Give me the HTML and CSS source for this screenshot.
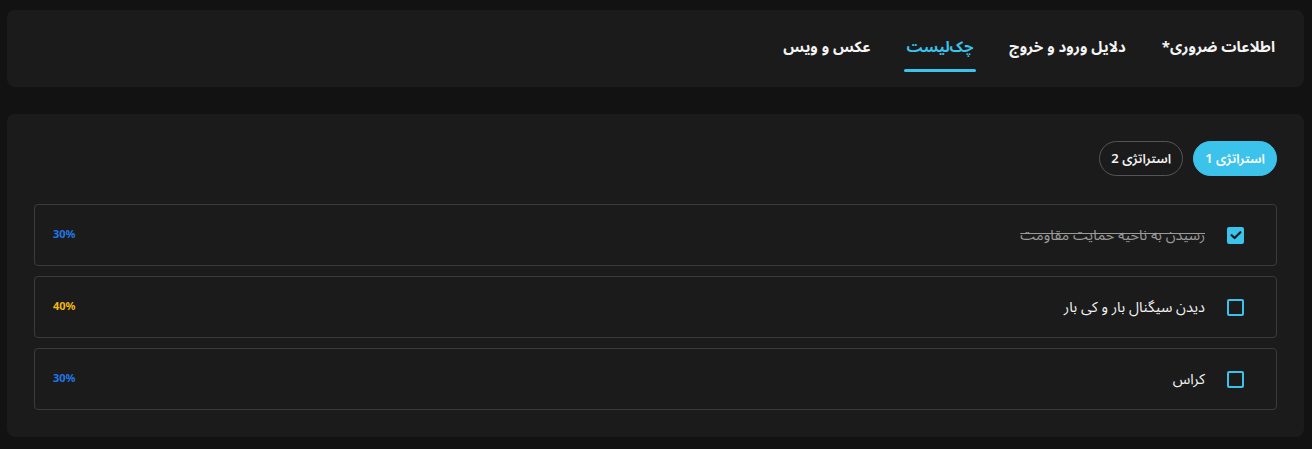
FILE: index.html
```html
<!DOCTYPE html>
<html lang="fa" dir="rtl">
<head>
<meta charset="utf-8">
<link rel="stylesheet" href="styles.css">
</head>
<body>
<div class="page">
  <nav class="card tabs">
    <div class="tab">اطلاعات ضروری*</div>
    <div class="tab">دلایل ورود و خروج</div>
    <div class="tab active">چک‌لیست</div>
    <div class="tab">عکس و ویس</div>
  </nav>
  <section class="card checklist">
    <div class="pills">
      <button class="pill on">استراتژی 1</button>
      <button class="pill">استراتژی 2</button>
    </div>
    <div class="rows">
      <div class="row">
        <span class="box checked"><svg viewBox="0 0 16 16" width="16" height="16"><path d="M3.6 8.2 L6.6 11 L12.4 5.2" fill="none" stroke="#1b1b1b" stroke-width="2.2" stroke-linecap="round" stroke-linejoin="round"/></svg></span>
        <span class="label done">رسیدن به ناحیه حمایت مقاومت</span>
        <span class="pct blue">30%</span>
      </div>
      <div class="row">
        <span class="box"></span>
        <span class="label">دیدن سیگنال بار و کی بار</span>
        <span class="pct yellow">40%</span>
      </div>
      <div class="row">
        <span class="box"></span>
        <span class="label">کراس</span>
        <span class="pct blue">30%</span>
      </div>
    </div>
  </section>
</div>
</body>
</html>
```
FILE: styles.css
```css
* { box-sizing: border-box; }
html, body { margin: 0; padding: 0; }
body {
  background: #121212;
  font-family: "Noto Sans Arabic", "DejaVu Sans", "Noto Sans", sans-serif;
  color: #f2f2f2;
  width: 1312px;
  height: 449px;
  overflow: hidden;
}
.page {
  padding: 10px 8px 0 7px;
  display: flex;
  flex-direction: column;
  gap: 27px;
}
.card {
  background: #1b1b1b;
  border-radius: 8px;
}
.tabs {
  height: 77px;
  display: flex;
  align-items: stretch;
  gap: 30px;
  padding: 0 26px 0 0;
}
.tab {
  display: flex;
  align-items: center;
  padding: 0 3px 4px;
  font-size: 15px;
  font-weight: bold;
  color: #f4f4f4;
  position: relative;
}
.tab.active { color: #3cc3ec; }
.tab.active::after {
  content: "";
  position: absolute;
  left: 0;
  right: 0;
  top: 59px;
  height: 3px;
  border-radius: 2px;
  background: #3cc3ec;
}
.checklist {
  height: 323px;
  padding: 27px 27px 27px 27px;
  display: flex;
  flex-direction: column;
  gap: 28px;
}
.pills {
  display: flex;
  gap: 10px;
}
.pill {
  font-family: inherit;
  height: 35px;
  padding: 0 11px;
  border-radius: 18px;
  border: 1px solid #555;
  background: transparent;
  color: #f2f2f2;
  font-size: 13px;
  font-weight: 600;
}
.pill.on {
  background: #3cc3ec;
  border-color: #3cc3ec;
  color: #fff;
}
.rows {
  display: flex;
  flex-direction: column;
  gap: 10px;
}
.row {
  height: 62px;
  border: 1px solid #3b3b3b;
  border-radius: 4px;
  display: flex;
  align-items: center;
  padding: 0 32px 0 18px;
  gap: 22px;
}
.box {
  width: 17px;
  height: 17px;
  border: 2px solid #3cc3ec;
  border-radius: 2px;
  flex: none;
  display: flex;
  align-items: center;
  justify-content: center;
}
.box.checked { background: #3cc3ec; }
.box svg { flex: none; }
.label {
  font-size: 14.5px;
  color: #f2f2f2;
  flex: 1;
}
.label.done {
  color: #9a9a9a;
  text-decoration: line-through;
}
.pct {
  font-size: 11px;
  font-weight: bold;
  font-family: "Noto Sans", "DejaVu Sans", sans-serif;
  align-self: flex-start;
  margin-top: 21px;
}
.pct.blue { color: #1f78e6; }
.pct.yellow { color: #f2b714; }
```
